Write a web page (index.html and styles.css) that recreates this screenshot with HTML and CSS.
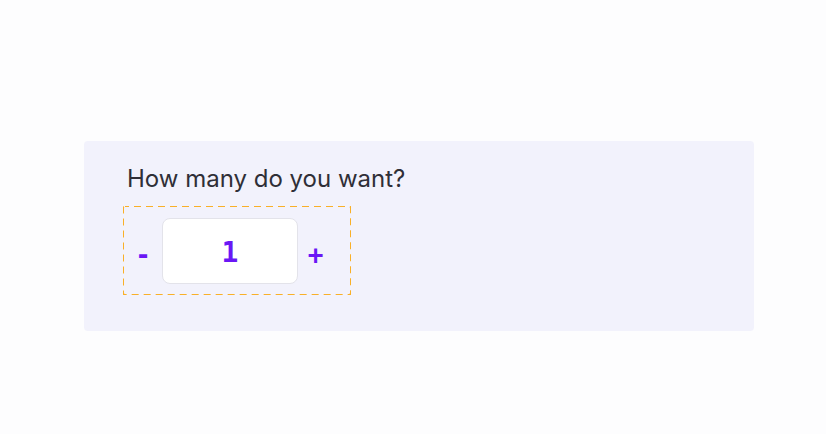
FILE: index.html
```html
<!DOCTYPE html>
<html lang="en">
<head>
<meta charset="utf-8">
<title>Quantity</title>
<link rel="stylesheet" href="styles.css">
</head>
<body>
<div class="page">
  <section class="panel">
    <label class="label" for="qty">How many do you want?</label>
    <div class="stepper">
      <button class="step minus" type="button">-</button>
      <input id="qty" class="qty" type="text" value="1">
      <button class="step plus" type="button">+</button>
    </div>
  </section>
</div>
</body>
</html>
```
FILE: styles.css
```css
html, body {
  margin: 0;
  padding: 0;
  background: #fdfdfe;
}
body {
  font-family: Inter, "Noto Sans", sans-serif;
}
.page {
  padding: 141px 72px 0 84px;
}
.panel {
  width: 670px;
  height: 190px;
  box-sizing: border-box;
  background: #f2f2fc;
  border-radius: 4px;
  padding: 23px 0 0 39px;
  display: flex;
  flex-direction: column;
  align-items: flex-start;
}
.label {
  font-size: 24px;
  color: #2f2f37;
  margin-left: 4px;
  line-height: 29px;
}
.stepper {
  margin-top: 13px;
  display: flex;
  align-items: center;
  width: 228px;
  height: 89px;
  box-sizing: border-box;
  padding: 0 18px 0 1px;
  background-image: url("data:image/svg+xml,%3Csvg xmlns='http://www.w3.org/2000/svg' width='100%25' height='100%25'%3E%3Crect width='100%25' height='100%25' fill='none' stroke='%23f9b028' stroke-width='2' stroke-dasharray='7 5' stroke-dashoffset='3' rx='2'/%3E%3C/svg%3E");
}
.step {
  background: none;
  border: 0;
  padding: 0;
  margin-top: 8px;
  font-family: "DejaVu Sans Mono", monospace;
  font-weight: bold;
  font-size: 26px;
  color: #6a17f5;
  line-height: 30px;
  cursor: pointer;
}
.minus {
  width: 38px;
}
.plus {
  width: 35px;
}
.qty {
  width: 136px;
  height: 66px;
  box-sizing: border-box;
  border: 1px solid #e3e3ea;
  border-radius: 8px;
  background: #ffffff;
  text-align: center;
  font-family: "DejaVu Sans Mono", monospace;
  font-weight: bold;
  font-size: 28px;
  color: #6a17f5;
  padding: 4px 0 0 0;
  outline: none;
}
```
